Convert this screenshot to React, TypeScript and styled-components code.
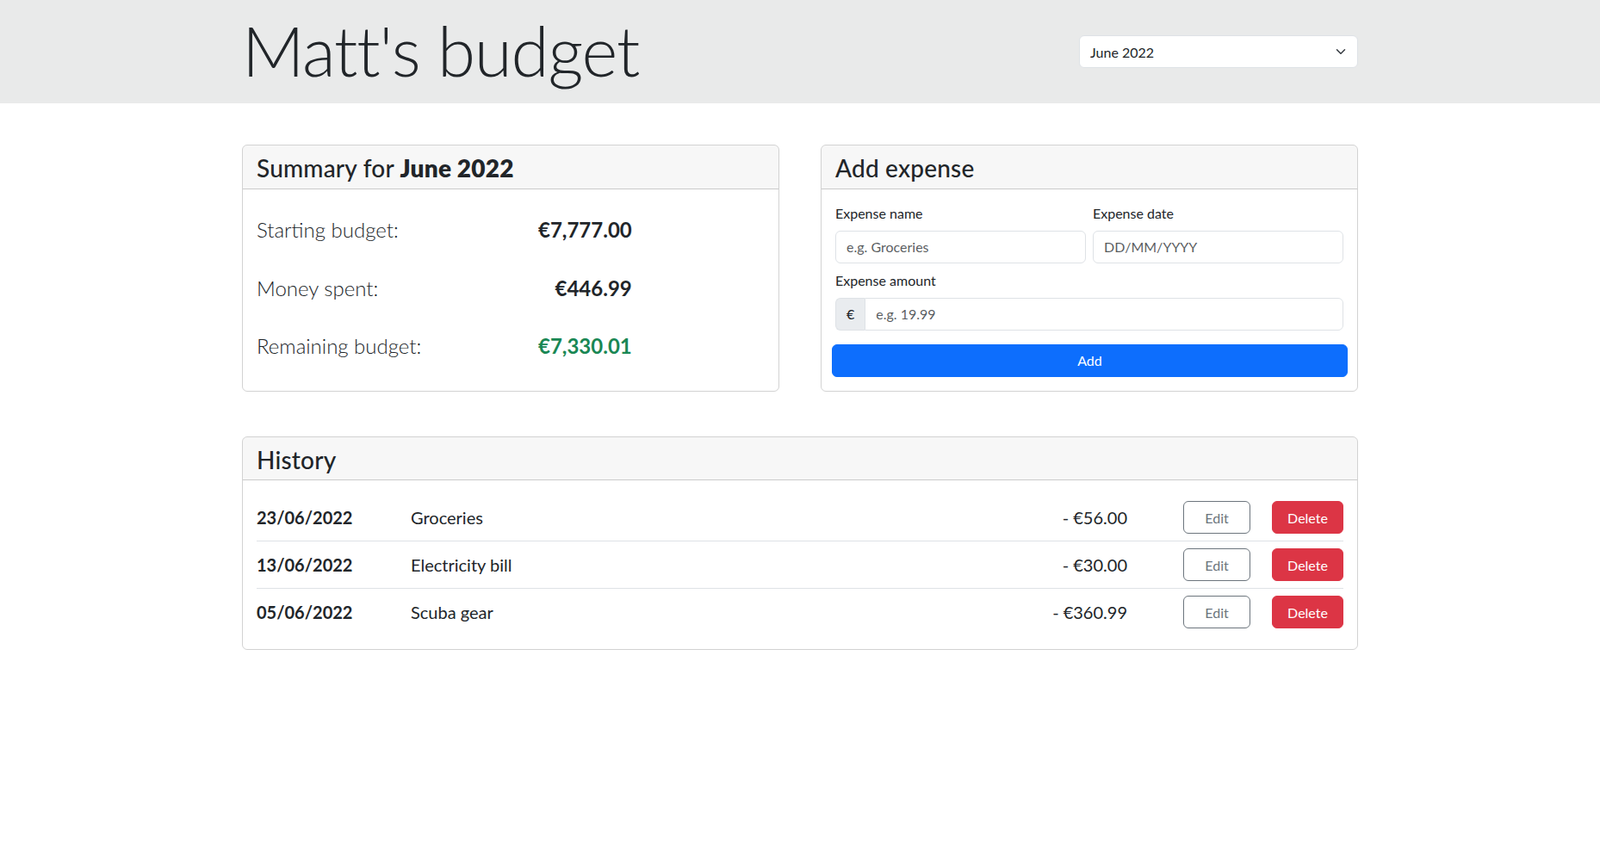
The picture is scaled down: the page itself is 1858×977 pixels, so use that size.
import React from "react";
import styled, { createGlobalStyle } from "styled-components";

const GlobalStyle = createGlobalStyle`
  * {
    box-sizing: border-box;
  }
  body {
    margin: 0;
    font-family: "Lato", "Liberation Sans", sans-serif;
    font-size: 16px;
    line-height: 1.5;
    color: #212529;
    background: #fff;
  }
`;

const Header = styled.header`
  background: #e9eaea;
  height: 120px;
  padding: 10px 0 14px;
`;

const Container = styled.div`
  width: 1320px;
  margin: 0 auto;
  padding: 0 12px;
`;

const HeaderRow = styled.div`
  display: flex;
  align-items: center;
  justify-content: space-between;
`;

const Title = styled.h1`
  margin: 0;
  font-size: 80px;
  font-weight: 300;
  line-height: 1.2;
  letter-spacing: -1.2px;
`;

const SelectWrap = styled.div`
  position: relative;
  width: 324px;
  margin-top: 4px;
`;

const Select = styled.select`
  appearance: none;
  width: 100%;
  height: 38px;
  padding: 6px 36px 6px 12px;
  font-family: inherit;
  font-size: 16px;
  color: #212529;
  background: #fff;
  border: 1px solid #dee2e6;
  border-radius: 6px;
`;

const Chevron = styled.svg`
  position: absolute;
  right: 12px;
  top: 13px;
  width: 16px;
  height: 12px;
  pointer-events: none;
`;

const Main = styled(Container)`
  padding-top: 48px;
`;

const TopGrid = styled.div`
  display: grid;
  grid-template-columns: 1fr 1fr;
  column-gap: 48px;
`;

const Card = styled.section<{ $spaced?: boolean }>`
  border: 1px solid rgba(0, 0, 0, 0.175);
  border-radius: 6px;
  margin-top: ${(p) => (p.$spaced ? "52px" : "0")};
  display: flex;
  flex-direction: column;
  overflow: hidden;
`;

const CardHeader = styled.div`
  background: rgba(0, 0, 0, 0.03);
  border-bottom: 1px solid rgba(0, 0, 0, 0.175);
  padding: 10px 16px 6px;
`;

const CardTitle = styled.h3`
  margin: 0;
  font-size: 28px;
  font-weight: 500;
  line-height: 1.2;
  letter-spacing: 0.2px;
  strong {
    font-weight: 800;
  }
`;

const CardBody = styled.div<{ $top?: number }>`
  padding: ${(p) => p.$top ?? 16}px 16px 16px;
`;

const SummaryRow = styled.div`
  display: grid;
  grid-template-columns: 282.5px 129.25px;
  column-gap: 24px;
  align-items: center;
  height: 67.5px;
  font-size: 24px;
  line-height: 36px;
`;

const SummaryLabel = styled.span`
  font-weight: 300;
`;

const SummaryValue = styled.span<{ $positive?: boolean }>`
  text-align: right;
  font-weight: 700;
  color: ${(p) => (p.$positive ? "#198754" : "#212529")};
`;

const FormGrid = styled.div`
  display: grid;
  grid-template-columns: 1fr 1fr;
  gap: 8px;
`;

const Field = styled.div<{ $wide?: boolean }>`
  grid-column: ${(p) => (p.$wide ? "1 / -1" : "auto")};
`;

const Label = styled.label`
  display: block;
  margin-bottom: 8px;
  font-size: 16px;
  line-height: 24px;
`;

const Input = styled.input<{ $joined?: boolean }>`
  display: block;
  width: 100%;
  height: 38px;
  padding: 6px 12px;
  font-family: inherit;
  font-size: 16px;
  color: #212529;
  background: #fff;
  border: 1px solid #dee2e6;
  border-radius: ${(p) => (p.$joined ? "0 6px 6px 0" : "6px")};
  &::placeholder {
    color: rgba(33, 37, 41, 0.75);
  }
`;

const InputGroup = styled.div`
  display: flex;
`;

const Addon = styled.span`
  display: flex;
  align-items: center;
  padding: 6px 12px;
  background: #e9ecef;
  border: 1px solid #dee2e6;
  border-right: none;
  border-radius: 6px 0 0 6px;
  font-size: 16px;
`;

const AddButton = styled.button`
  display: block;
  width: calc(100% + 9px);
  height: 38px;
  margin: 16px -5px 0 -4px;
  font-family: inherit;
  font-size: 16px;
  color: #fff;
  background: #0d6efd;
  border: 1px solid #0d6efd;
  border-radius: 6px;
`;

const HistoryRow = styled.div<{ $last?: boolean }>`
  display: grid;
  grid-template-columns: 179px 1fr auto auto auto;
  align-items: center;
  padding: 8px 0;
  border-bottom: ${(p) => (p.$last ? "none" : "1px solid #dee2e6")};
  font-size: 20px;
  line-height: 30px;
`;

const DateCell = styled.span`
  font-weight: 700;
`;

const Amount = styled.span`
  text-align: right;
  margin-right: 65px;
`;

const Button = styled.button<{ $variant: "edit" | "delete" }>`
  width: ${(p) => (p.$variant === "delete" ? "83px" : "78px")};
  height: 38px;
  margin-left: ${(p) => (p.$variant === "delete" ? "25px" : "0")};
  padding: 0;
  font-family: inherit;
  font-size: 16px;
  border-radius: 6px;
  border: 1px solid ${(p) => (p.$variant === "delete" ? "#dc3545" : "#6c757d")};
  background: ${(p) => (p.$variant === "delete" ? "#dc3545" : "#fff")};
  color: ${(p) => (p.$variant === "delete" ? "#fff" : "#6c757d")};
`;

const summary = [
  { label: "Starting budget:", value: "€7,777.00" },
  { label: "Money spent:", value: "€446.99" },
  { label: "Remaining budget:", value: "€7,330.01", positive: true },
];

const expenses = [
  { date: "23/06/2022", name: "Groceries", amount: "- €56.00" },
  { date: "13/06/2022", name: "Electricity bill", amount: "- €30.00" },
  { date: "05/06/2022", name: "Scuba gear", amount: "- €360.99" },
];

const App: React.FC = () => {
  return (
    <>
      <GlobalStyle />
      <Header>
        <Container>
          <HeaderRow>
            <Title>Matt's budget</Title>
            <SelectWrap>
              <Select defaultValue="2022-06">
                <option value="2022-06">June 2022</option>
                <option value="2022-05">May 2022</option>
              </Select>
              <Chevron viewBox="0 0 16 16">
                <path
                  d="m2 5 6 6 6-6"
                  fill="none"
                  stroke="#343a40"
                  strokeWidth="2"
                  strokeLinecap="round"
                  strokeLinejoin="round"
                />
              </Chevron>
            </SelectWrap>
          </HeaderRow>
        </Container>
      </Header>

      <Main>
        <TopGrid>
          <Card>
            <CardHeader>
              <CardTitle>
                Summary for <strong>June 2022</strong>
              </CardTitle>
            </CardHeader>
            <CardBody $top={14}>
              {summary.map((s) => (
                <SummaryRow key={s.label}>
                  <SummaryLabel>{s.label}</SummaryLabel>
                  <SummaryValue $positive={s.positive}>{s.value}</SummaryValue>
                </SummaryRow>
              ))}
            </CardBody>
          </Card>

          <Card>
            <CardHeader>
              <CardTitle>Add expense</CardTitle>
            </CardHeader>
            <CardBody>
              <FormGrid>
                <Field>
                  <Label htmlFor="exp-name">Expense name</Label>
                  <Input id="exp-name" placeholder="e.g. Groceries" />
                </Field>
                <Field>
                  <Label htmlFor="exp-date">Expense date</Label>
                  <Input id="exp-date" placeholder="DD/MM/YYYY" />
                </Field>
                <Field $wide>
                  <Label htmlFor="exp-amount">Expense amount</Label>
                  <InputGroup>
                    <Addon>€</Addon>
                    <Input id="exp-amount" $joined placeholder="e.g. 19.99" />
                  </InputGroup>
                </Field>
              </FormGrid>
              <AddButton>Add</AddButton>
            </CardBody>
          </Card>
        </TopGrid>

        <Card $spaced>
          <CardHeader>
            <CardTitle>History</CardTitle>
          </CardHeader>
          <CardBody>
            {expenses.map((e, i) => (
              <HistoryRow key={e.date} $last={i === expenses.length - 1}>
                <DateCell>{e.date}</DateCell>
                <span>{e.name}</span>
                <Amount>{e.amount}</Amount>
                <Button $variant="edit">Edit</Button>
                <Button $variant="delete">Delete</Button>
              </HistoryRow>
            ))}
          </CardBody>
        </Card>
      </Main>
    </>
  );
};

export default App;
